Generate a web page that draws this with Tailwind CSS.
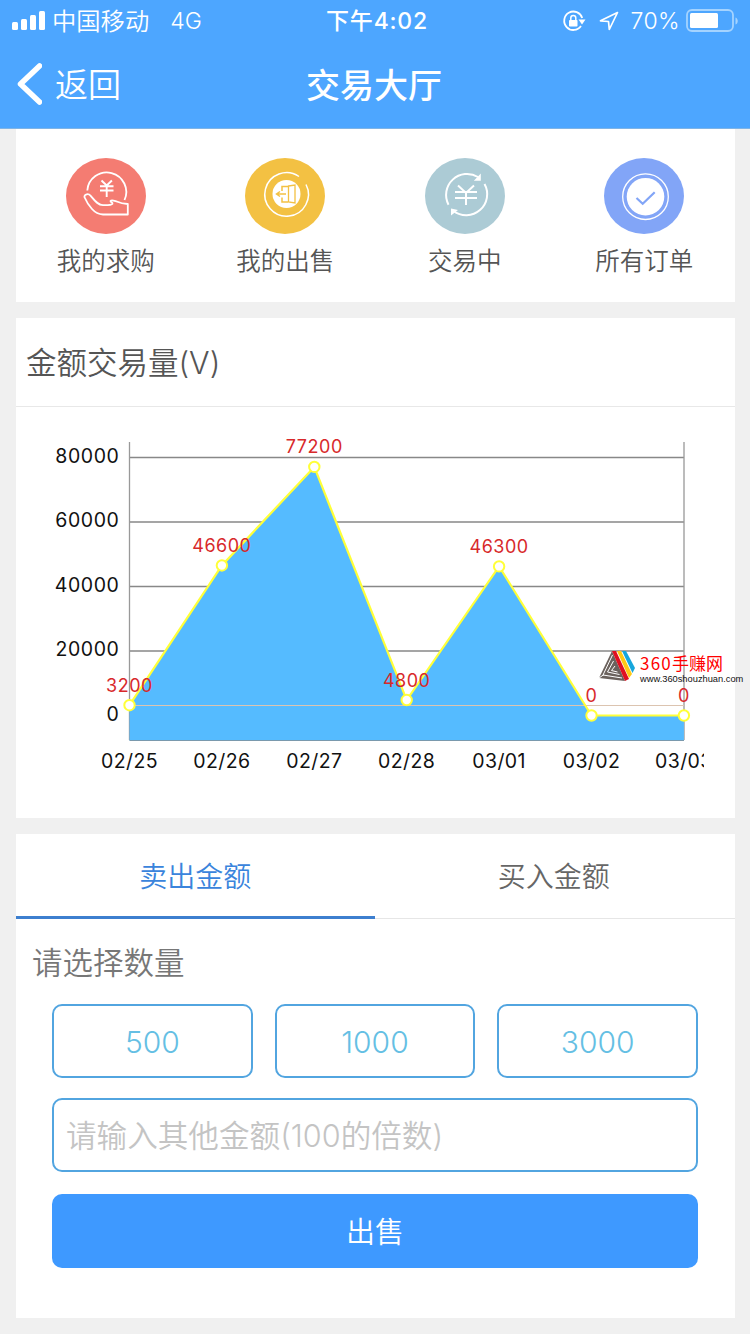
<!DOCTYPE html>
<html lang="zh-CN">
<head>
    <meta charset="UTF-8">
    <meta name="viewport" content="width=device-width, initial-scale=1.0">
    <title>交易大厅</title>
    <!--Tailwind Library-->
    <script src="https://cdn.jsdelivr.net/npm/@tailwindcss/browser@4"></script>
</head>
<body class="w-[750px] h-[1334px] overflow-hidden bg-[#f0f0f0] font-['Inter','Noto_Sans_CJK_SC',sans-serif] font-[350] text-[#555]">

    <!--Header-->
    <header class="h-[129px] bg-[#4da6ff] border-b border-[#7fb4e6] text-white">
        <!--Status Bar-->
        <div class="h-[42px] grid grid-cols-[1fr_auto_1fr] items-center pl-3 pr-[11px] text-[22px]">
            <div class="flex items-center">
                <svg class="w-[34px] h-5" viewBox="0 0 34 20" fill="currentColor">
                    <rect x="0" y="11" width="6" height="8" rx="1.5"/>
                    <rect x="9" y="8" width="6" height="11" rx="1.5"/>
                    <rect x="18" y="4" width="6" height="15" rx="1.5"/>
                    <rect x="27" y="0" width="6" height="19" rx="1.5"/>
                </svg>
                <span class="ml-[6px] text-[24.3px]">中国移动</span>
                <span class="ml-[21px] text-[23px]">4G</span>
            </div>
            <p class="font-medium text-[23px] tracking-[0.8px] pl-[3px]">下午4:02</p>
            <div class="flex items-center justify-end">
                <svg class="w-6 h-6" viewBox="0 0 24 24" fill="none" stroke="currentColor" stroke-width="1.8">
                    <path d="M19 17A9.200 9.200 0 1 1 20.200 9"/>
                    <path d="M16.500 10.500h7l-3.500 5z" fill="currentColor" stroke="none"/>
                    <rect x="7" y="11" width="8.500" height="6.500" rx=".8" fill="currentColor" stroke="none"/>
                    <path d="M8.800 11V9a2.500 2.500 0 0 1 5 0v2" stroke-width="1.500"/>
                </svg>
                <svg class="ml-[13px] w-5 h-5" viewBox="0 0 20 20" fill="none" stroke="currentColor" stroke-width="1.700" stroke-linejoin="round">
                    <path d="M18.500 1.500L1.500 9.800l8 .7.800 8z"/>
                </svg>
                <span class="ml-3 text-[23px] tracking-[0.4px]">70%</span>
                <svg class="ml-[6px] w-[53px] h-6" viewBox="0 0 53 24" fill="none">
                    <rect x="1" y="1" width="46" height="21" rx="5" stroke="#a4d3ff" stroke-width="1.800"/>
                    <rect x="4" y="4" width="28" height="15" rx="1.500" fill="#fff"/>
                    <path d="M49.500 8.500v7c3-1 3-6 0-7z" fill="#a4d3ff"/>
                </svg>
            </div>
        </div>
        <!--Nav Bar-->
        <div class="h-[86px] grid grid-cols-[1fr_auto_1fr] items-center pl-4 pr-[18px]">
            <a class="flex items-center text-[33px]" href="#">
                <svg class="w-[26px] h-11" viewBox="0 0 26 44" fill="none" stroke="currentColor" stroke-width="5.500" stroke-linecap="round" stroke-linejoin="round">
                    <path d="M23.500 3L4.500 21 23.500 39"/>
                </svg>
                <span class="ml-[13px] pt-[2px]">返回</span>
            </a>
            <h1 class="text-[34px] font-medium">交易大厅</h1>
        </div>
    </header>

    <main class="ml-4 mr-[15px] flex flex-col gap-4">
        <!--Menu-->
        <nav class="h-[173px] bg-white pt-[29px] pr-px grid grid-cols-4 text-[24.5px] text-center leading-9">
            <a class="flex flex-col items-center gap-[9px]" href="#">
                <svg class="w-20 h-[76px]" viewBox="0 0 80 76" fill="none" stroke="#fff" stroke-width="1.800" stroke-linejoin="round">
                    <ellipse cx="40" cy="38" rx="40" ry="38" fill="#f47c72" stroke="none"/>
                    <path d="M21.300 32.500A19.500 19.500 0 1 1 58.500 42"/>
                    <path d="M35.500 22.500l5.200 5 5.200-5M34 28.200h13.500M34 32.500h13.500M40.700 28v11" stroke-width="1.900"/>
                    <path d="M18.400 39c0-3 4-3.800 6.300-1.200 3.600 4.300 6.700 9.300 12.300 9.400 5 .1 8.500.1 9.500-1.500.5-1-2.300-1.700-2-2.700.8-1.200 4.800-.3 7 .8 3.500 1.700 6.500 2 10.300 2.200v10.500H37c-5-.3-8.500-2.700-11-5.500-3.500-4-5.700-7.500-7.600-12z"/>
                </svg>
                <span>我的求购</span>
            </a>
            <a class="flex flex-col items-center gap-[9px]" href="#">
                <svg class="w-20 h-[76px]" viewBox="0 0 80 76" fill="none" stroke="#fff" stroke-width="1.500">
                    <ellipse cx="40" cy="38" rx="40" ry="38" fill="#f3c143" stroke="none"/>
                    <path d="M54 18.500A21.800 21.800 0 1 0 61 26.500"/>
                    <circle cx="41.500" cy="36" r="14" fill="#fff" stroke="none"/>
                    <path d="M43.500 28l6.500-1v18l-6.500-1z" stroke="#f3c143" stroke-width="1.300"/>
                    <path d="M43 28.500h-6v4.500m0 6.500v4.500h6M41 36H31.500m3.500-2.500L31.500 36l3.500 2.500" stroke="#f3c143"/>
                </svg>
                <span>我的出售</span>
            </a>
            <a class="flex flex-col items-center gap-[9px]" href="#">
                <svg class="w-20 h-[76px]" viewBox="0 0 80 76" fill="none" stroke="#fff" stroke-width="2">
                    <ellipse cx="40" cy="38" rx="40" ry="38" fill="#accbd5" stroke="none"/>
                    <path d="M23.500 46.700A21 21 0 0 1 53 19M59.500 26A21 21 0 0 1 28.500 53"/>
                    <path d="M55.800 15.500v7.300h-7zM26 50.500l7 1.500-7 5.500z" fill="#fff" stroke="none"/>
                    <path d="M33 27.500l8 7.500 8-7.500M30 34h22M30 40h22M41 34v13"/>
                </svg>
                <span>交易中</span>
            </a>
            <a class="flex flex-col items-center gap-[9px]" href="#">
                <svg class="w-20 h-[76px]" viewBox="0 0 80 76" fill="none" stroke="#fff">
                    <ellipse cx="40" cy="38" rx="40" ry="38" fill="#82a5f7" stroke="none"/>
                    <circle cx="41.500" cy="38.700" r="22.800" stroke-width="1.300"/>
                    <circle cx="41.500" cy="38.700" r="18.800" fill="#fff" stroke="none"/>
                    <path d="M32.500 40l6.200 5.800 12-11.600" stroke="#82a5f7" stroke-width="2.200"/>
                </svg>
                <span>所有订单</span>
            </a>
        </nav>

        <!--Chart-->
        <section class="relative h-[500px] bg-white">
            <h2 class="h-[89px] border-b border-[#e8e8e8] pl-[10px] pt-[2px] flex items-center text-[30.5px]">金额交易量(V)</h2>
            <svg class="w-[688px] h-[411px] font-normal" viewBox="16 407 688 411">
                <path d="M129.500 457.500H684M129.500 522H684M129.500 586.500H684M129.500 651H684" stroke="#888" stroke-width="1.300"/>
                <path d="M129.500 442V740M684 442V740" stroke="#999" stroke-width="1.300"/>
                <path id="area" fill="#55bbff"/>
                <path d="M129.500 740.500H684" stroke="#7a99ad"/>
                <path d="M129.500 705.500H684" stroke="#dcc4b0"/>
                <path id="line" fill="none" stroke="#ffff38" stroke-width="2.200"/>
                <g id="dots" fill="#fff" stroke="#ffff38" stroke-width="2"></g>
                <g id="values" fill="#d8292b" font-size="18" letter-spacing=".5" text-anchor="middle"></g>
                <g id="days" fill="#111" font-size="19.5" letter-spacing=".4" text-anchor="middle"></g>
                <g fill="#111" font-size="19.5" letter-spacing=".6" text-anchor="end">
                    <text x="119.500" y="463">80000</text>
                    <text x="119.500" y="527">60000</text>
                    <text x="119.500" y="592">40000</text>
                    <text x="119.500" y="656">20000</text>
                    <text x="119.500" y="721">0</text>
                </g>
            </svg>
            <!--Site Mark-->
            <div class="absolute left-[583px] top-[332px] w-[146px] flex items-start gap-[5px] font-normal">
                <svg class="shrink-0 w-9 h-8" viewBox="0 0 36 32">
                    <path d="M13 1L0 28l26 3z" fill="#6b625d"/>
                    <path d="M13.500 5L4 25l19 3M14.500 11L8.500 22l12 2.500M16 16l-3.500 4.500 6 1.500M0 28l5-3.500" fill="none" stroke="#fff" stroke-width="1"/>
                    <path d="M13 1h4l13 28-4 2z" fill="#e01020"/>
                    <path d="M18 1h4l11 23-3 4z" fill="#ffc814"/>
                    <path d="M23 1h4l9 17-2.500 5z" fill="#16a6dc"/>
                </svg>
                <div class="whitespace-nowrap">
                    <p class="text-[17px] leading-[26px] text-[#f00] font-['Noto_Sans_CJK_SC',sans-serif]"><span class="tracking-[1.2px]">360</span>手赚网</p>
                    <p class="text-[9.300px] leading-[6px] text-[#111] font-['Liberation_Sans',sans-serif]">www.360shouzhuan.com</p>
                </div>
            </div>
        </section>

        <!--Trade Form-->
        <section class="h-[484px] bg-white">
            <div class="h-[85px] pr-[2px] grid grid-cols-2 text-[28px] text-center leading-[84px] border-b border-[#e6e6e6]">
                <button class="h-[85px] pt-px text-[#3a84dc] border-b-3 border-[#3d7fcf]">卖出金额</button>
                <button class="h-[84px] pt-px text-[#666]">买入金额</button>
            </div>
            <p class="pl-4 h-[85px] pt-[21px] text-[30.5px] leading-[46px] text-[#777]">请选择数量</p>
            <form class="pl-9 pr-[37px]">
                <div class="grid grid-cols-3 gap-[22px] text-[30px] text-[#65bfe4]">
                    <button type="button" class="h-[74px] pt-[2px] border-2 border-[#52a5e0] rounded-[10px]">500</button>
                    <button type="button" class="h-[74px] pt-[2px] border-2 border-[#52a5e0] rounded-[10px]">1000</button>
                    <button type="button" class="h-[74px] pt-[2px] border-2 border-[#52a5e0] rounded-[10px]">3000</button>
                </div>
                <input class="mt-5 w-full h-[74px] px-3 border-2 border-[#52a5e0] rounded-[10px] text-[30.6px] placeholder:text-[#c4c4c4]" type="text" placeholder="请输入其他金额(100的倍数)">
                <button type="button" class="mt-[22px] pt-[3px] w-full h-[74px] rounded-[10px] bg-[#3e99ff] text-[29px] text-white">出售</button>
            </form>
        </section>
    </main>

    <script>
        // Daily volume
        var days = ['02/25', '02/26', '02/27', '02/28', '03/01', '03/02', '03/03'];
        var volumes = [3200, 46600, 77200, 4800, 46300, 0, 0];

        // 20000 is 64.4px high, zero sits at 715.5
        var points = volumes.map(function(v, i) {
            return [129.5 + i * 92.4, 715.5 - v * 64.4 / 20000];
        });
        var path = 'M' + points.join('L');
        document.getElementById('line').setAttribute('d', path);
        document.getElementById('area').setAttribute('d', path + 'V740.5H129.5Z');

        points.forEach(function(p, i) {
            document.getElementById('dots').innerHTML += '<circle cx="' + p[0] + '" cy="' + p[1] + '" r="5.2"/>';
            document.getElementById('values').innerHTML += '<text x="' + p[0] + '" y="' + (p[1] - 13.5) + '">' + volumes[i] + '</text>';
            document.getElementById('days').innerHTML += '<text x="' + p[0] + '" y="768">' + days[i] + '</text>';
        });
    </script>
</body>
</html>
